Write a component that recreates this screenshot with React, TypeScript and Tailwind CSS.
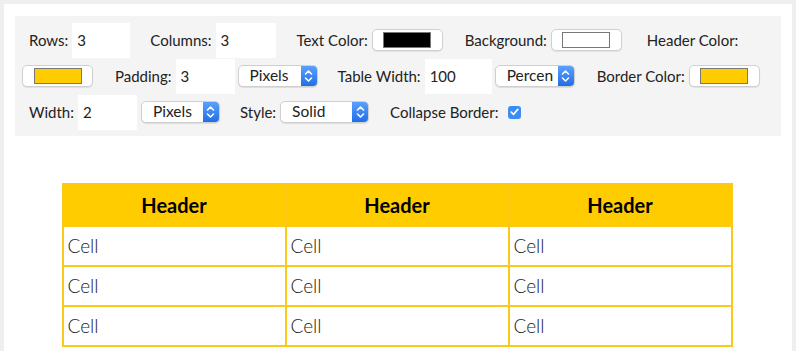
import React from "react";

const font = { fontFamily: "Lato, 'Liberation Sans', sans-serif" };

function Input({ value, w }: { value: string; w: string }) {
  return (
    <div className={`${w} h-[35px] bg-white flex items-center pl-[5px] text-[15px] text-[#222]`}>{value}</div>
  );
}

function Swatch({ color }: { color: string }) {
  return (
    <div className="w-[71px] h-[22px] bg-white border border-[#d0d0d0] rounded-[5px] flex items-center justify-center shadow-[0_1px_1px_rgba(0,0,0,0.08)]">
      <div className="w-[48px] h-[16px] border border-[#777]" style={{ background: color }} />
    </div>
  );
}

function Select({ label, w }: { label: string; w: string }) {
  return (
    <div className={`${w} h-[22px] bg-white border border-[#cfcfcf] rounded-[5px] flex items-center overflow-hidden shadow-[0_1px_1px_rgba(0,0,0,0.1)]`}>
      <div className="flex-1 pl-[11px] text-[15.5px] text-[#222] leading-none">{label}</div>
      <div className="w-[16px] h-full bg-gradient-to-b from-[#5aa0ff] to-[#1f6fe6] flex items-center justify-center">
        <svg width="9" height="14" viewBox="0 0 9 14" fill="none" stroke="white" strokeWidth="1.6" strokeLinecap="round" strokeLinejoin="round">
          <path d="M1.5 5 L4.5 2 L7.5 5" />
          <path d="M1.5 9 L4.5 12 L7.5 9" />
        </svg>
      </div>
    </div>
  );
}

function Label({ children, ml }: { children: React.ReactNode; ml: string }) {
  return <span className={`${ml} mr-[4px] text-[15px] text-[#222]`}>{children}</span>;
}

export default function App() {
  const rows = [0, 1, 2];
  return (
    <div style={font} className="w-[796px] h-[351px] border-[4px] border-b-0 border-[#efefef] bg-white px-[11px] pt-[12px] overflow-hidden">
      <div className="bg-[#f4f4f4] pt-[6px] pb-[6px] pl-[7px]">
        <div className="flex items-center h-[36px]">
          <Label ml="ml-[7px]">Rows:</Label>
          <Input value="3" w="w-[58px]" />
          <Label ml="ml-[20px]">Columns:</Label>
          <Input value="3" w="w-[60px]" />
          <Label ml="ml-[21px]">Text Color:</Label>
          <Swatch color="#000000" />
          <Label ml="ml-[22px]">Background:</Label>
          <Swatch color="#ffffff" />
          <Label ml="ml-[25px]">Header Color:</Label>
        </div>
        <div className="flex items-center h-[36px]">
          <Swatch color="#ffcc00" />
          <Label ml="ml-[22px]">Padding:</Label>
          <Input value="3" w="w-[59px]" />
          <div className="ml-[3px]"><Select label="Pixels" w="w-[80px]" /></div>
          <Label ml="ml-[20px]">Table Width:</Label>
          <Input value="100" w="w-[67px]" />
          <div className="ml-[3px]"><Select label="Percen" w="w-[80px]" /></div>
          <Label ml="ml-[22px]">Border Color:</Label>
          <Swatch color="#ffcc00" />
        </div>
        <div className="flex items-center h-[36px]">
          <Label ml="ml-[7px]">Width:</Label>
          <Input value="2" w="w-[59px]" />
          <div className="ml-[4px]"><Select label="Pixels" w="w-[79px]" /></div>
          <Label ml="ml-[20px]">Style:</Label>
          <Select label="Solid" w="w-[89px]" />
          <Label ml="ml-[21px]">Collapse Border:</Label>
          <div className="ml-[6px] w-[13px] h-[13px] rounded-[3px] bg-[#3b8cf5] flex items-center justify-center">
            <svg width="9" height="8" viewBox="0 0 9 8" fill="none" stroke="white" strokeWidth="1.7" strokeLinecap="round" strokeLinejoin="round">
              <path d="M1.2 4.2 L3.5 6.4 L7.8 1.4" />
            </svg>
          </div>
        </div>
      </div>
      <div className="pt-[47px] flex justify-center pr-[2px]">
        <table className="w-[671px] border-collapse border-[2px] border-[#fbc91a] table-fixed">
          <thead>
            <tr className="h-[42px] bg-[#ffcc00]">
              {rows.map((i) => (
                <th key={i} className="border-[2px] border-[#fbc91a] p-[3px] text-[20px] font-bold text-black text-center">Header</th>
              ))}
            </tr>
          </thead>
          <tbody>
            {rows.map((r) => (
              <tr key={r} className="h-[40px]">
                {rows.map((c) => (
                  <td key={c} className="border-[2px] border-[#fbc91a] px-[4px] py-[3px] text-[19px] font-light text-[#222] text-left">Cell</td>
                ))}
              </tr>
            ))}
          </tbody>
        </table>
      </div>
    </div>
  );
}
